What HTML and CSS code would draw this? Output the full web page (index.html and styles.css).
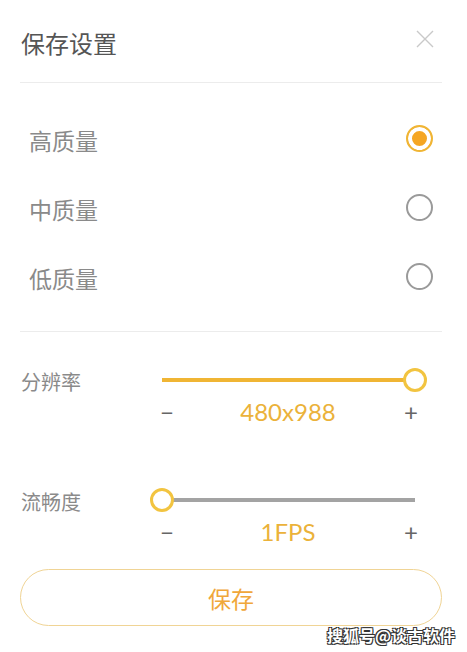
FILE: index.html
```html
<!DOCTYPE html>
<html lang="zh-CN">

<head>
    <meta charset="UTF-8">
    <title>保存设置</title>
    <link rel="stylesheet" href="styles.css">
</head>

<body>
    <div class="panel">
        <div class="head">
            <h1 class="title">保存设置</h1>
            <svg class="close" width="18" height="18" viewBox="0 0 18 18">
                <path d="M1 1L17 17M17 1L1 17" stroke="#c9c9c9" stroke-width="1.4" fill="none" />
            </svg>
        </div>

        <div class="options">
            <div class="option">
                <span class="option-name">高质量</span>
                <span class="radio on"></span>
            </div>
            <div class="option">
                <span class="option-name">中质量</span>
                <span class="radio"></span>
            </div>
            <div class="option">
                <span class="option-name">低质量</span>
                <span class="radio"></span>
            </div>
        </div>

        <div class="sliders">
            <div class="slider">
                <span class="slider-name">分辨率</span>
                <div class="track">
                    <div class="fill" style="width: 100%"></div>
                    <span class="thumb" style="left: 100%"></span>
                </div>
                <div class="values">
                    <span class="step">−</span>
                    <span class="value">480x988</span>
                    <span class="step">+</span>
                </div>
            </div>
            <div class="slider">
                <span class="slider-name">流畅度</span>
                <div class="track gray">
                    <div class="fill" style="width: 0%"></div>
                    <span class="thumb" style="left: 0%"></span>
                </div>
                <div class="values">
                    <span class="step">−</span>
                    <span class="value">1FPS</span>
                    <span class="step">+</span>
                </div>
            </div>
        </div>

        <button class="save">保存</button>
    </div>
    <div class="mark">搜狐号@谈古软件</div>
</body>

</html>
```

FILE: styles.css
```css
* {
    margin: 0;
    padding: 0;
    box-sizing: border-box;
}

html,
body {
    width: 100%;
    height: 100%;
    background: #fff;
}

body {
    position: relative;
    overflow: hidden;
    font-family: "Noto Sans CJK SC", "Noto Sans", sans-serif;
}

.panel {
    padding: 0 25px 0 20px;
}

.head {
    height: 83px;
    display: flex;
    align-items: center;
    justify-content: space-between;
    border-bottom: 1px solid #ececec;
    padding: 4px 8px 0 1px;
}

.title {
    font-size: 24px;
    font-weight: normal;
    color: #555;
    line-height: 30px;
}

.close {
    margin-top: -8px;
}

.options {
    padding: 22px 9px 19px 9px;
    border-bottom: 1px solid #ececec;
}

.option {
    height: 69px;
    display: flex;
    align-items: center;
    justify-content: space-between;
}

.option-name {
    font-size: 23px;
    color: #8a8a8a;
    margin-top: 0;
}

.radio {
    width: 27px;
    height: 27px;
    border-radius: 50%;
    border: 2px solid #9a9a9a;
    margin-top: -3px;
}

.radio.on {
    border-color: #f0b534;
    background: #f5a623;
    box-shadow: inset 0 0 0 4px #fff;
}

.sliders {
    padding-top: 36px;
}

.slider {
    display: grid;
    grid-template-columns: 140px 256px;
    grid-template-rows: 24px 22px;
    row-gap: 9px;
    margin-bottom: 65px;
}

.slider:last-child {
    margin-bottom: 26px;
}

.slider-name {
    font-size: 20px;
    color: #8a8a8a;
    align-self: center;
    line-height: 24px;
    margin-top: 3px;
    padding-left: 1px;
}

.track {
    position: relative;
    align-self: center;
    height: 4px;
    margin: 0 1px 0 2px;
    background: #f0b534;
}

.track.gray {
    background: #a3a3a3;
}

.fill {
    height: 100%;
    background: #f0b534;
}

.thumb {
    position: absolute;
    top: 50%;
    width: 24px;
    height: 24px;
    margin: -12px 0 0 -12px;
    border-radius: 50%;
    border: 3px solid #f2c440;
    background: #fff;
}

.values {
    grid-column: 2;
    display: flex;
    justify-content: space-between;
    align-items: center;
    font-family: "Lato", "Noto Sans", sans-serif;
    line-height: 22px;
}

.step {
    font-size: 24px;
    color: #666;
    width: 12px;
    text-align: center;
}

.value {
    font-size: 24px;
    color: #ebb23a;
}

.save {
    display: block;
    width: 100%;
    height: 57px;
    border: 1px solid #f0d495;
    border-radius: 29px;
    background: #fff;
    color: #f0a73a;
    font-family: "Noto Sans CJK SC", "Noto Sans", sans-serif;
    font-size: 23px;
    margin-left: 0;
    margin-right: -3px;
}

.mark {
    position: absolute;
    right: 12px;
    top: 623px;
    font-size: 16px;
    font-weight: bold;
    color: #fff;
    text-shadow: 1px 1px 0 #333, -1px -1px 0 #333, 1px -1px 0 #333, -1px 1px 0 #333;
}
```
